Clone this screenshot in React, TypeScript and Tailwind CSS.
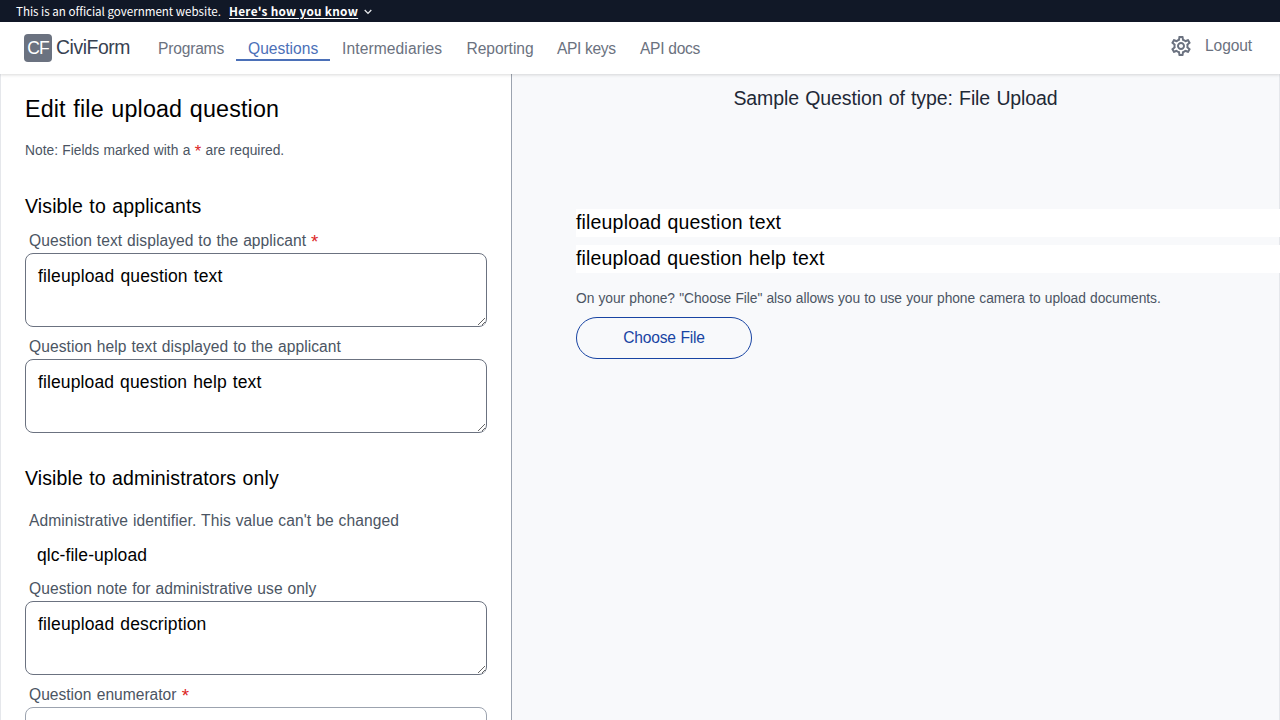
import { MdOutlineSettings } from "react-icons/md";

type FieldProps = { label: string; value: string; labelTracking: string; textTracking: string; required?: boolean };

function Required() {
  return <span className="align-[-2px] text-[1.2em] leading-none text-[#dc2626]">*</span>;
}

function Field({ label, value, labelTracking, textTracking, required }: FieldProps) {
  return (
    <div>
      <label className={`block h-6 pl-1 text-[15.6px] leading-6 text-[#4b5563] [word-spacing:0.5px] ${labelTracking}`}>
        {label} {required && <Required />}
      </label>
      <textarea
        className={`block h-[74px] w-full resize rounded-lg border border-[#6b7280] bg-white px-3 py-2 text-[17.5px] leading-7 text-black outline-none [word-spacing:1px] ${textTracking}`}
        defaultValue={value}
      />
    </div>
  );
}

const navItems = [
  { name: "Programs", cls: "w-[90px] tracking-[-0.2px]" },
  { name: "Questions", cls: "w-[94px]", active: true },
  { name: "Intermediaries", cls: "w-[124.5px] tracking-[0.1px]" },
  { name: "Reporting", cls: "w-[90.5px] tracking-[-0.07px]" },
  { name: "API keys", cls: "w-[83px] tracking-[-0.37px]" },
  { name: "API docs", cls: "w-[84px] tracking-[-0.3px]" },
];

export default function App() {
  return (
    <div className="flex h-[720px] w-[1280px] flex-col overflow-hidden bg-white font-['Liberation_Sans',Arial,sans-serif] text-black">
      <div className="flex h-[22px] shrink-0 items-center bg-[#111827] px-4 font-['Noto_Sans_CJK_SC','Open_Sans',sans-serif] leading-[22px] text-white">
        <span className="w-[213px] text-[11.6px] tracking-[-0.02px] whitespace-nowrap">This is an official government website.</span>
        <button className="text-[11.8px] font-bold tracking-[0.28px] whitespace-nowrap underline underline-offset-2">Here's how you know</button>
        <svg className="mt-0.5 ml-1.5 h-1.5 w-2" viewBox="0 0 8 6" fill="none" stroke="#e5e7eb" strokeWidth="1.3">
          <path d="M0.7 1 4 4.4 7.3 1" />
        </svg>
      </div>

      <header className="relative z-10 flex h-[52px] shrink-0 bg-white pr-7 pl-6 shadow-[0_1px_3px_rgba(0,0,0,0.15)]">
        <div className="flex w-[122px] gap-1 self-start pt-3">
          <span className="flex h-7 w-7 shrink-0 justify-center rounded bg-[#6b7280] text-[17.5px] leading-7 tracking-[-0.9px] text-white">CF</span>
          <span className="text-[19.4px] leading-[27px] tracking-[-0.45px] text-[#374151]">CiviForm</span>
        </div>
        <nav className="flex pt-[13px]">
          {navItems.map((n) => (
            <a
              key={n.name}
              className={`h-[26px] px-3 text-[15.6px] leading-7 whitespace-nowrap ${n.cls} ${n.active ? "border-b-2 border-[#4b70b8] text-[#4b70b8]" : "text-[#6b7280]"}`}
            >
              {n.name}
            </a>
          ))}
        </nav>
        <div className="ml-auto flex w-[83px] gap-3 self-start pt-3 text-[#6b7280]">
          <MdOutlineSettings className="h-6 w-6 shrink-0" />
          <a className="text-[15.6px] leading-6 tracking-[-0.1px]">Logout</a>
        </div>
      </header>

      <main className="flex min-h-0 flex-1">
        <section className="w-[512px] shrink-0 overflow-hidden border-r border-l border-r-[#9ca3af] border-l-[#e5e7eb] px-6 pt-[19px]">
          <h1 className="h-8 text-[23.3px] leading-[33px] tracking-[0.15px] [word-spacing:1px]">Edit file upload question</h1>
          <p className="mt-[15px] h-5 text-[13.8px] leading-[21px] text-[#4b5563] [word-spacing:0.5px]">
            Note: Fields marked with a <Required /> are required.
          </p>
          <h2 className="mt-8 h-7 text-[19.5px] leading-[29px] tracking-[0.13px] [word-spacing:0.8px]">Visible to applicants</h2>
          <div className="mt-[9px] flex flex-col gap-2">
            <Field label="Question text displayed to the applicant" value="fileupload question text" labelTracking="tracking-[0.06px]" textTracking="tracking-[0.145px]" required />
            <Field label="Question help text displayed to the applicant" value="fileupload question help text" labelTracking="tracking-[0.065px]" textTracking="tracking-[0.12px]" />
          </div>
          <h2 className="mt-[31px] h-7 text-[19.5px] leading-[29px] tracking-[0.12px] [word-spacing:0.8px]">Visible to administrators only</h2>
          <p className="mt-[17px] h-6 pl-1 text-[15.6px] leading-6 tracking-[0.085px] text-[#4b5563] [word-spacing:0.5px]">Administrative identifier. This value can't be changed</p>
          <p className="mt-2 mb-2 h-7 pl-3 text-[17.5px] leading-7 tracking-[0.07px]">qlc-file-upload</p>
          <div className="flex flex-col gap-2">
            <Field label="Question note for administrative use only" value="fileupload description" labelTracking="tracking-[0.055px]" textTracking="tracking-[0.14px]" />
            <div>
              <label className="block h-6 pl-1 text-[15.6px] leading-6 text-[#4b5563] [word-spacing:1px]">
                Question enumerator <Required />
              </label>
              <div className="h-11 rounded-lg border border-[#9ca3af] bg-white" />
            </div>
          </div>
        </section>

        <section className="min-w-0 flex-1 border-r border-[#e5e7eb] bg-[#f8f9fb] pt-[10px]">
          <h2 className="h-7 text-center text-[19.5px] leading-[29px] tracking-[-0.11px] text-[#1f2937] [word-spacing:1px]">Sample Question of type: File Upload</h2>
          <div className="mt-[97px] -mr-px pl-16">
            <div className="h-7 bg-white text-[19.5px] leading-[27px] tracking-[0.17px] [word-spacing:0.8px]">fileupload question text</div>
            <div className="mt-2 h-7 bg-white text-[19.5px] leading-[27px] tracking-[0.15px] [word-spacing:0.8px]">fileupload question help text</div>
            <p className="mt-[15px] h-5 text-[13.8px] leading-[21px] tracking-[-0.07px] text-[#4b5563] [word-spacing:0.5px]">
              On your phone? "Choose File" also allows you to use your phone camera to upload documents.
            </p>
            <button className="mt-[9px] block h-[42px] w-44 rounded-full border border-[#1844a3] text-[15.6px] leading-6 tracking-[-0.2px] text-[#1844a3] [word-spacing:0.5px]">Choose File</button>
          </div>
        </section>
      </main>
    </div>
  );
}
